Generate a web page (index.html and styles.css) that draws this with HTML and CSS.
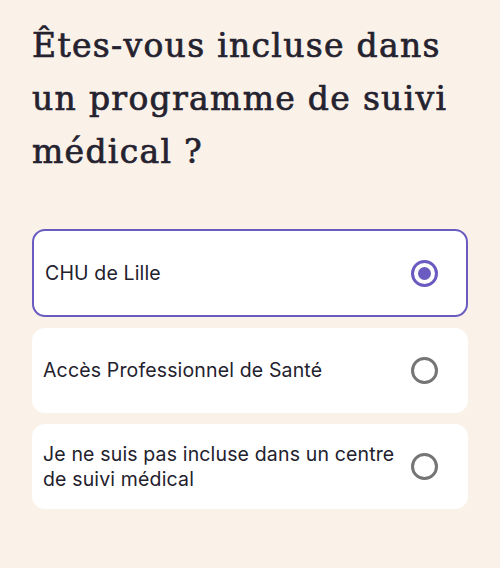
FILE: index.html
```html
<!DOCTYPE html>
<html lang="fr">
<head>
<meta charset="utf-8">
<link rel="stylesheet" href="styles.css">
</head>
<body>
<main class="page">
  <h1 class="title">Êtes-vous incluse dans un programme de suivi médical&nbsp;?</h1>
  <div class="options">
    <div class="option option--selected">
      <span class="label">CHU de Lille</span>
      <span class="radio radio--on"><span class="dot"></span></span>
    </div>
    <div class="option">
      <span class="label">Accès Professionnel de Santé</span>
      <span class="radio"></span>
    </div>
    <div class="option">
      <span class="label">Je ne suis pas incluse dans un centre de suivi médical</span>
      <span class="radio"></span>
    </div>
  </div>
</main>
</body>
</html>
```

FILE: styles.css
```css
html, body {
  margin: 0;
  padding: 0;
  background: #faf1e9;
}
.page {
  padding: 19px 32px 0 32px;
}
.title {
  margin: 0 0 51px 0;
  max-width: 430px;
  font-family: "DejaVu Serif", serif;
  font-weight: 400;
  font-size: 33px;
  letter-spacing: 1.3px;
  -webkit-text-stroke: 0.7px #25222f;
  line-height: 53px;
  color: #25222f;
}
.options {
  display: flex;
  flex-direction: column;
  gap: 11px;
}
.option {
  box-sizing: border-box;
  min-height: 85px;
  display: flex;
  align-items: center;
  justify-content: space-between;
  gap: 8px;
  padding: 0 30px 0 11px;
  background: #ffffff;
  border-radius: 13px;
}
.option--selected {
  min-height: 88px;
  border: 2px solid #6a5bc0;
  padding: 0 28px 0 11px;
}
.label {
  font-family: Inter, "Noto Sans", sans-serif;
  font-size: 19.5px;
  letter-spacing: 0.15px;
  line-height: 25px;
  color: #23212d;
}
.radio {
  flex: none;
  box-sizing: border-box;
  width: 27px;
  height: 27px;
  border-radius: 50%;
  border: 3px solid #757575;
  display: flex;
  align-items: center;
  justify-content: center;
}
.radio--on {
  border-color: #6a5bc0;
}
.dot {
  width: 13px;
  height: 13px;
  border-radius: 50%;
  background: #6a5bc0;
}
```
